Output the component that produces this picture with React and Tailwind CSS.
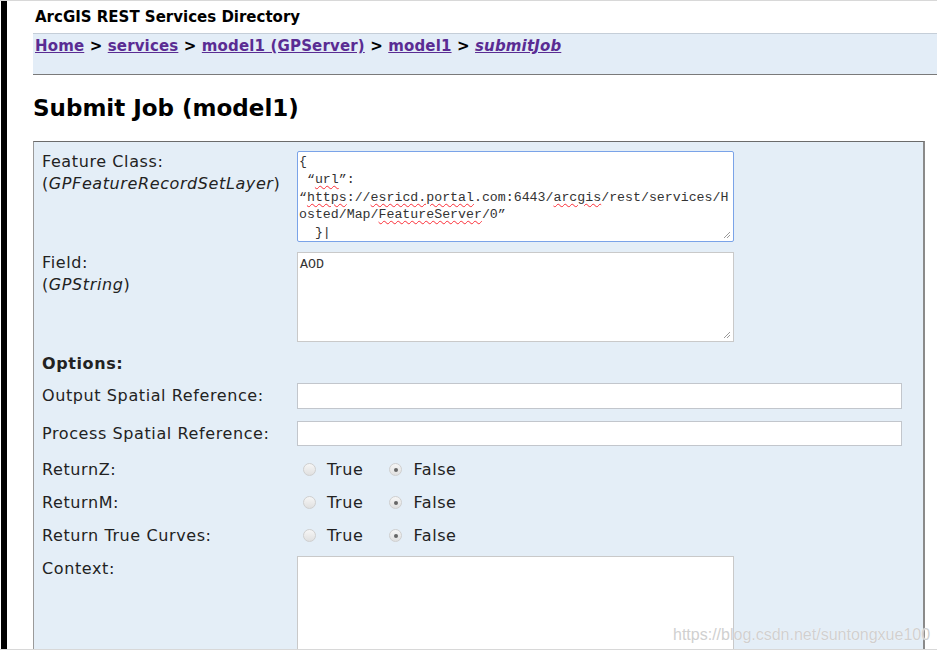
import React from "react";

const sans = { fontFamily: '"DejaVu Sans", Verdana, sans-serif' };
const mono = { fontFamily: '"Liberation Mono", "Courier New", monospace' };

const Squiggle = ({ children }) => (
  <span className="underline decoration-wavy decoration-red-500 decoration-1 underline-offset-2">
    {children}
  </span>
);

const Grip = () => (
  <svg width="9" height="9" viewBox="0 0 9 9" className="absolute right-[2px] bottom-[2px]">
    <path d="M8 2L2 8M8 5L5 8" stroke="#9a9a9a" strokeWidth="1" />
  </svg>
);

const Radio = ({ checked }) => (
  <span className="inline-block w-[13px] h-[13px] rounded-full border border-[#cfcfcf] bg-gradient-to-b from-[#f6f6f6] to-[#e0e0e0] relative">
    {checked && (
      <span className="absolute left-[3.5px] top-[3.5px] w-[4px] h-[4px] rounded-full bg-[#666]" />
    )}
  </span>
);

const RadioRow = ({ label }) => (
  <div className="flex items-center h-[33px]">
    <div className="w-[255px]">{label}</div>
    <div className="flex items-center">
      <span className="ml-[6px] flex"><Radio /></span>
      <span className="ml-[11px]">True</span>
      <span className="ml-[26px] flex"><Radio checked /></span>
      <span className="ml-[11px]">False</span>
    </div>
  </div>
);

export default function App() {
  return (
    <div className="relative h-[652px] w-[937px] overflow-hidden bg-white flex border-t border-[#d8d8d8]" style={sans}>
      <div className="w-[6px] ml-[1px] bg-black shrink-0" />

      <div className="flex-1 pl-[26px]">
        {/* header */}
        <div className="h-[32px] flex items-center pl-[2px] text-[15px] font-bold text-black">
          ArcGIS REST Services Directory
        </div>

        {/* breadcrumb */}
        <div className="h-[42px] bg-[#e3edf7] border-t border-[#c5ced8] border-b border-b-[#7a7a7a] pl-[2px] pt-[1px] text-[15px] font-bold tracking-[0.15px]">
          <a className="text-[#5a2c93] underline">Home</a>
          <span> &gt; </span>
          <a className="text-[#5a2c93] underline">services</a>
          <span> &gt; </span>
          <a className="text-[#5a2c93] underline">model1 (GPServer)</a>
          <span> &gt; </span>
          <a className="text-[#5a2c93] underline">model1</a>
          <span> &gt; </span>
          <a className="text-[#5a2c93] underline italic">submitJob</a>
        </div>

        {/* title */}
        <h2 className="h-[66px] flex items-center text-[23px] font-bold text-black">
          Submit Job (model1)
        </h2>

        {/* form */}
        <div className="mr-[12px] bg-[#e4eef7] border-t border-t-[#6b6b6b] border-l border-l-[#9a9a9a] border-r-2 border-r-[#8a8a8a] pl-[8px] pt-[9px] h-[520px] text-[16px] tracking-[0.6px] text-[#222]">
          <div className="flex">
            <div className="w-[255px] leading-[22px]">
              Feature Class:
              <br />(<i>GPFeatureRecordSetLayer</i>)
            </div>
            <div className="relative w-[437px] h-[91px] bg-white border border-[#7aa3e8] rounded-[2px] px-[1px] pt-[1px] text-[13.25px] leading-[17.75px] tracking-normal text-[#333] whitespace-pre overflow-hidden" style={mono}>
              {"{\n “"}<Squiggle>url</Squiggle>{"”:\n“"}<Squiggle>https</Squiggle>{"://"}<Squiggle>esricd.portal</Squiggle>{".com:6443/"}<Squiggle>arcgis</Squiggle>{"/rest/services/H\nosted/Map/"}<Squiggle>FeatureServer</Squiggle>{"/0”\n  }|"}
              <Grip />
            </div>
          </div>

          <div className="flex mt-[10px]">
            <div className="w-[255px] leading-[22px]">
              Field:
              <br />(<i>GPString</i>)
            </div>
            <div className="relative w-[437px] h-[90px] bg-white border border-[#c9c9c9] px-[2px] pt-[3px] text-[13.25px] leading-[17.75px] tracking-normal text-[#333]" style={mono}>
              AOD
              <Grip />
            </div>
          </div>

          <div className="mt-[10px] h-[23px] leading-[23px] font-bold">Options:</div>

          <div className="flex items-center mt-[8px]">
            <div className="w-[255px]">Output Spatial Reference:</div>
            <div className="flex-1 mr-[21px] h-[26px] bg-white border border-[#c2c6cc]" />
          </div>

          <div className="flex items-center mt-[12px]">
            <div className="w-[255px]">Process Spatial Reference:</div>
            <div className="flex-1 mr-[21px] h-[25px] bg-white border border-[#c2c6cc]" />
          </div>

          <div className="mt-[7px]">
            <RadioRow label="ReturnZ:" />
            <RadioRow label="ReturnM:" />
            <RadioRow label="Return True Curves:" />
          </div>

          <div className="flex mt-[4px]">
            <div className="w-[255px] pt-[1px]">Context:</div>
            <div className="w-[437px] h-[110px] bg-white border border-[#c9c9c9]" />
          </div>
        </div>
      </div>

      <div className="absolute left-0 right-0 bottom-0 h-[3px] border-t border-[#d8d8d8] bg-white" />

      <div
        className="absolute left-[673px] top-[622px] text-[16px] text-[#d0d0d0]"
        style={{ fontFamily: '"Liberation Sans", Arial, sans-serif', textShadow: "0 0 1px #fff" }}
      >
        https://blog.csdn.net/suntongxue100
      </div>
    </div>
  );
}
